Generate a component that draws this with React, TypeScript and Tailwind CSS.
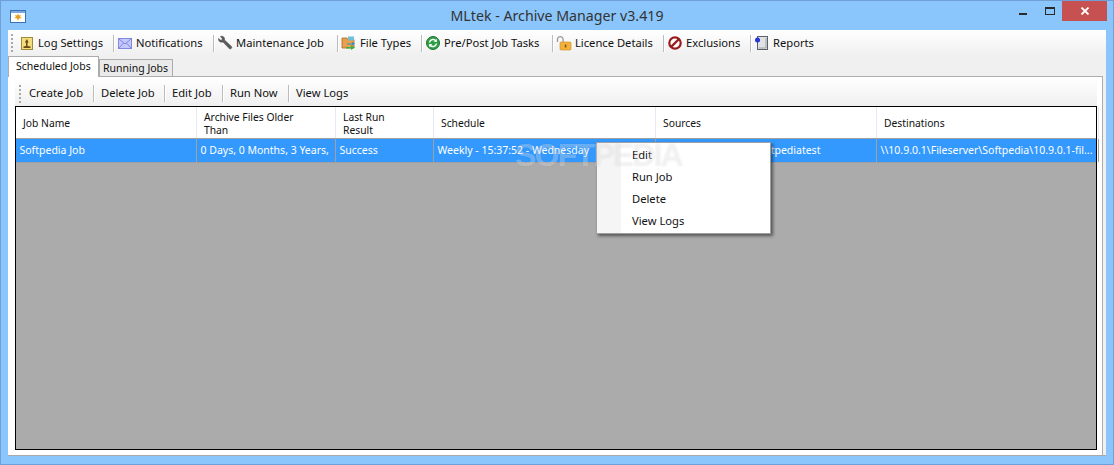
import type { ReactNode } from 'react'

const LogIcon = () => (
  <svg width="16" height="16" viewBox="0 0 16 16">
    <rect x="2.500" y="2.500" width="11" height="12" fill="#f3dc7a" stroke="#a08a3a" />
    <path d="M8 4l1.500 3-1 1v3l3 .5v1.500H4.500v-1.500L7 11V8L6 7z" fill="#6b4a1c" />
  </svg>
)

const MailIcon = () => (
  <svg width="16" height="16" viewBox="0 0 16 16">
    <rect x="1.500" y="3.500" width="13" height="10" fill="#c4c8f8" stroke="#8088e0" />
    <path d="M2 4l6 5 6-5M2 13l4.500-5M14 13l-4.500-5" fill="none" stroke="#7f86e4" />
  </svg>
)

const WrenchIcon = () => (
  <svg width="16" height="16" viewBox="0 0 16 16">
    <path d="M1.500 3.500L4 5.500l1.500-1.500L3.500 1.500C6 .5 8 2.500 7.500 5l7 6.500c.8 1-.5 3-2 2.300L6 7C3.500 7.800 1 6 1.500 3.500z" fill="#5c5c5c" stroke="#3c3c3c" strokeWidth=".5" />
  </svg>
)

const FolderIcon = () => (
  <svg width="16" height="16" viewBox="0 0 16 16">
    <path d="M1 3h5l1 1.500h6V13H1z" fill="#e8a04a" stroke="#b06a20" strokeWidth=".8" />
    <rect x="7" y="1.500" width="6" height="4" fill="#6fc0d8" />
    <path d="M5 12h5v-2l4 2.500L10 15v-1.500H5z" fill="#3fb04a" />
    <path d="M6 8.500h5V7l3 1.500-3 2V9.500H6z" fill="#2f8fd0" />
  </svg>
)

const TasksIcon = () => (
  <svg width="16" height="16" viewBox="0 0 16 16">
    <circle cx="8" cy="8" r="6.500" fill="#2e9e44" stroke="#1c7a30" />
    <path d="M4.500 7.500A3.600 3.600 0 0 1 11 6M11.500 8.500A3.600 3.600 0 0 1 5 10" fill="none" stroke="#fff" strokeWidth="1.500" />
    <path d="M11.800 3.800v3.200H8.800zM4.200 12.200V9h3z" fill="#fff" />
  </svg>
)

const LockIcon = () => (
  <svg width="16" height="16" viewBox="0 0 16 16">
    <path d="M1.500 7V4.500a2.800 2.800 0 0 1 5.600 0V7" fill="none" stroke="#9a9a9a" strokeWidth="1.300" />
    <rect x="4" y="7" width="11" height="8" rx="1" fill="#f4b13e" stroke="#c98a20" strokeWidth=".6" />
    <rect x="8.800" y="9.500" width="1.500" height="3" fill="#7a5410" />
  </svg>
)

const NoIcon = () => (
  <svg width="16" height="16" viewBox="0 0 16 16">
    <circle cx="8" cy="8" r="5.700" fill="#fff" stroke="#981c1c" strokeWidth="2.200" />
    <path d="M4 12l8-8" stroke="#981c1c" strokeWidth="2.400" />
  </svg>
)

const ReportIcon = () => (
  <svg width="16" height="16" viewBox="0 0 16 16">
    <rect x="3.500" y="1.500" width="10" height="13" fill="#dfe3e6" stroke="#5b6068" />
    <path d="M12 3v10H5" fill="none" stroke="#9aa0a6" />
    <circle cx="3.500" cy="5" r="2.500" fill="#2a35d8" />
  </svg>
)

const AppIcon = () => (
  <svg width="16" height="13" viewBox="0 0 16 13">
    <rect x=".5" y=".5" width="15" height="12" fill="#fff" stroke="#3d6fb4" />
    <rect x="1" y="1" width="14" height="2" fill="#7aa7de" />
    <path d="M8 3.500l1 2 2-.5-1 2 2 1-3 .5L8 11 7 8.500 4 8l2-1-1-2 2 .5z" fill="#e8a020" />
  </svg>
)

const mainItems = [
  { label: 'Log Settings', icon: <LogIcon />, width: 'w-[97px]' },
  { label: 'Notifications', icon: <MailIcon />, width: 'w-[99px]' },
  { label: 'Maintenance Job', icon: <WrenchIcon />, width: 'w-[123px]' },
  { label: 'File Types', icon: <FolderIcon />, width: 'w-[83px]' },
  { label: 'Pre/Post Job Tasks', icon: <TasksIcon />, width: 'w-[130px]' },
  { label: 'Licence Details', icon: <LockIcon />, width: 'w-[110px]' },
  { label: 'Exclusions', icon: <NoIcon />, width: 'w-[86px]' },
  { label: 'Reports', icon: <ReportIcon />, width: 'w-[80px]' },
]

const jobItems = [
  { label: 'Create Job', width: 'w-[71px]' },
  { label: 'Delete Job', width: 'w-[70px]' },
  { label: 'Edit Job', width: 'w-[57px]' },
  { label: 'Run Now', width: 'w-[65px]' },
  { label: 'View Logs', width: 'w-[70px]' },
]

const columns = [
  { title: 'Job Name', value: 'Softpedia Job', width: 'w-[181px]' },
  { title: 'Archive Files Older Than', value: '0 Days, 0 Months, 3 Years,', width: 'w-[139px]' },
  { title: 'Last Run Result', value: 'Success', width: 'w-[98px]' },
  { title: 'Schedule', value: 'Weekly - 15:37:52 - Wednesday', width: 'w-[222px]' },
  { title: 'Sources', value: '\\\\10.9.0.1\\Archives\\Softpediatest', width: 'w-[221px]' },
  { title: 'Destinations', value: '\\\\10.9.0.1\\Fileserver\\Softpedia\\10.9.0.1-fil...', width: 'w-[222px]' },
]

const Grip = ({ className }: { className: string }) => (
  <div className={`flex flex-col gap-[2px] ${className}`}>
    {[0, 1, 2, 3, 4].map((i) => (
      <div key={i} className="w-[2px] h-[2px] bg-[#a8a8a8]" />
    ))}
  </div>
)

const Sep = () => <div className="w-px h-[17px] bg-[#bcbcbc] shadow-[1px_0_0_#fff]" />

const Title = ({ children }: { children: ReactNode }) => (
  <div className="absolute inset-x-0 top-0 h-[30px] flex items-center justify-center text-[14.2px] text-[#333] font-['Noto_Sans',sans-serif]">
    {children}
  </div>
)

export default function App() {
  return (
    <div className="relative w-[1114px] h-[465px] overflow-hidden bg-[#8ac5fb] border border-[#6f9fd6] font-['Noto_Sans',sans-serif] text-[11.2px] text-[#111]">
      <Title>MLtek - Archive Manager v3.419</Title>

      <div className="relative h-[29px] flex items-start">
        <div className="ml-[9px] mt-[9px]">
          <AppIcon />
        </div>
        <div className="ml-auto mr-[6px] flex items-start">
          <div className="w-[8px] h-[2px] bg-[#2a2a2a] mt-[12px] mr-[18px]" />
          <div className="w-[10px] h-[8px] border border-t-2 border-[#2a2a2a] mt-[6px] mr-[7px]" />
          <div className="w-[45px] h-[20px] bg-[#c75050] flex items-center justify-center">
            <svg width="10" height="8" viewBox="0 0 10 8">
              <path d="M1.500 .5l7 7M8.500 .5l-7 7" stroke="#fff" strokeWidth="1.800" />
            </svg>
          </div>
        </div>
      </div>

      <div className="ml-[7px] mr-[7px] h-[426px] bg-[#f0f0f0] border-b border-[#a9a9a9] flex flex-col">
        <div className="h-[25px] flex items-center pt-[1px] bg-gradient-to-b from-white to-[#f0f0f0]">
          <Grip className="ml-[3px] mr-[3px]" />
          {mainItems.map((item, i) => (
            <div key={item.label} className="flex items-center">
              {i > 0 && <Sep />}
              <div className={`flex items-center gap-[3px] pl-[3px] whitespace-nowrap ${item.width}`}>
                {item.icon}
                <span>{item.label}</span>
              </div>
            </div>
          ))}
        </div>

        <div className="h-[21px] flex items-end text-[10.5px]">
          <div className="w-[91px] h-[21px] bg-white border border-b-0 border-[#acacac] pl-[7px] pt-[2px] -mb-px relative z-10 whitespace-nowrap">
            Scheduled Jobs
          </div>
          <div className="w-[74px] h-[17px] bg-[#eaeaea] border border-b-0 border-[#acacac] pl-[3px] leading-[16px] whitespace-nowrap">
            Running Jobs
          </div>
        </div>

        <div className="w-[1095px] flex-1 min-h-0 bg-white border-t border-r border-[#acacac] pl-[7px] pr-[5px] pb-[5px] flex flex-col">
          <div className="h-[29px] flex items-center pt-[4px] rounded-tr-[4px] bg-gradient-to-b from-white to-[#f0f0f0]">
            <Grip className="ml-[4px] mr-[1px]" />
            {jobItems.map((item, i) => (
              <div key={item.label} className="flex items-center">
                {i > 0 && <Sep />}
                <div className={`pl-[7px] whitespace-nowrap ${item.width}`}>{item.label}</div>
              </div>
            ))}
          </div>

          <div className="flex-1 min-h-0 bg-[#ababab] border border-black flex flex-col">
            <div className="h-[32px] flex bg-white border-b border-[#a0a0a0] text-[10.3px]">
              {columns.map((col) => (
                <div key={col.title} className={`h-full flex items-center pl-[7px] pr-[30px] pt-[2px] leading-[13px] border-r border-[#e3e9f5] shrink-0 ${col.width}`}>
                  {col.title}
                </div>
              ))}
            </div>
            <div className="h-[24px] flex bg-[#3399ff] text-white border-b border-[#a0a0a0] text-[10.5px]">
              {columns.map((col) => (
                <div key={col.title} className={`h-full flex items-center pl-[3.5px] pt-[1px] border-r border-[#a0a0a0] whitespace-nowrap overflow-hidden shrink-0 ${col.width}`}>
                  {col.value}
                </div>
              ))}
            </div>
          </div>
        </div>
      </div>

      <div className="absolute left-[595px] top-[141px] w-[175px] h-[92px] bg-white border border-[#a0a0a0] shadow-[2px_2px_3px_rgba(0,0,0,0.5)] flex">
        <div className="w-[24px] bg-[#f5f5f5]" />
        <div className="pl-[11px] pt-[1px]">
          {['Edit', 'Run Job', 'Delete', 'View Logs'].map((label) => (
            <div key={label} className="h-[22px] flex items-center">
              {label}
            </div>
          ))}
        </div>
      </div>

      <div className="absolute left-[514px] top-[134px] text-[32px] leading-[40px] font-bold tracking-[-1.8px] whitespace-nowrap text-white/30 [text-shadow:0_0_2px_rgba(0,0,0,0.08)] font-['Liberation_Sans',sans-serif]">
        SOFTPEDIA
      </div>
    </div>
  )
}
